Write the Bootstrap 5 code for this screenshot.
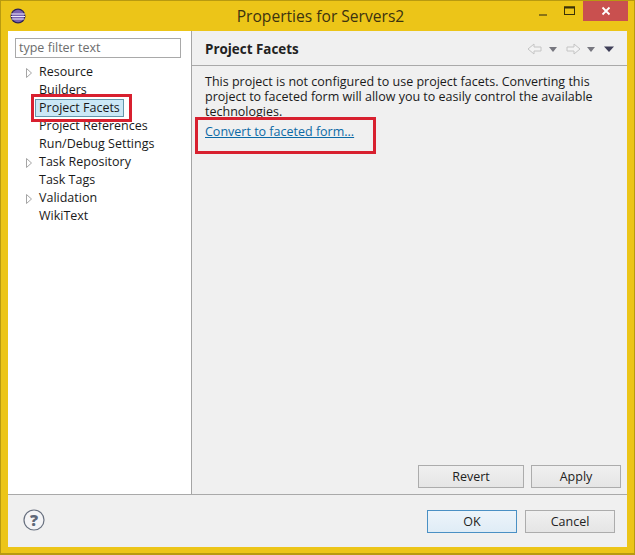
<!DOCTYPE html>
<html lang="en">
<head>
<meta charset="utf-8">
<title>Properties for Servers2</title>
<link href="https://cdn.jsdelivr.net/npm/bootstrap@5.3.0/dist/css/bootstrap.min.css" rel="stylesheet">
<style>
html,body{margin:0;height:555px;overflow:hidden}
body{font-family:"Open Sans","Noto Sans",sans-serif;font-size:12.5px;line-height:15px;color:#1a1a1a;background:#ecc518}
.win-frame{position:relative;width:635px;height:555px;background:#ecc518;border:1px solid #b89a10;border-bottom-width:2px;padding:0 7px 6px 7px}
.win-title{height:30px}
.win-icon{width:16px;height:16px;margin:7px 0 0 2px}
.win-name{font-size:15.6px;color:#3c3310;left:6px;right:0;top:6px;line-height:18px}
.win-ctrls{right:-1px;top:0}
.ctl-min,.ctl-max{width:27px;height:20px}
.ctl-close{width:45px;height:20px;background:#c9504f;color:#fff}
.win-client{background:#f0f0f0;height:517px}
.pane-left{width:184px;background:#fff;border-right:1px solid #a5a5a5;padding:7px 10px 0 7px}
.filter-box{height:20px;border:1px solid #a9a9a9;color:#6d6d6d;padding:0 3px;line-height:18px;margin-bottom:5px}
.tree-row{height:18px;line-height:18px;padding-left:24px;white-space:nowrap}
.tree-arrow{width:8px;height:10px;margin-left:-14px;margin-right:6px}
.tree-sel{background:#cbe8f6;border:1px solid #6498ac;width:89px;margin-left:20px;padding-left:3px;line-height:16px}
.pane-right{background:#f0f0f0}
.pane-head{height:35px;border-bottom:1px solid #a9a9a9;padding:2px 13px 0}
.pane-h{font-size:13.4px;font-weight:700;color:#222}
.pane-tools{margin-right:-3px}
.pane-text{padding:8px 13px 0 13px;width:420px}
.pane-link{color:#0c6aa6;display:block;margin-top:5px;line-height:15px}
.pane-actions{padding:0 6px 6px 0;gap:7px}
.foot-bar{height:53px;background:#f0f0f0;border-top:1px solid #a9a9a9;padding:15px 12px 0 15px}
.dlg-btn{height:23px;border:1px solid #acacac;background:linear-gradient(#f0f0f0,#e5e5e5);color:#222;line-height:21px;text-align:center}
.btn-w106{width:106px}
.btn-w90{width:90px}
.btn-def{border-color:#4a90c4;background:linear-gradient(#edf4fa,#dfecf6)}
.help-ico{margin-top:-1px}
.note-box{position:absolute;border:3px solid #d8202f;pointer-events:none}
.note-a{left:30px;top:93px;width:101px;height:28px}
.note-b{left:194px;top:116px;width:181px;height:37px}
</style>
</head>
<body>
<div class="win-frame d-flex flex-column">
  <div class="win-title position-relative flex-shrink-0">
    <svg class="win-icon" viewBox="0 0 16 16">
      <circle cx="8" cy="8" r="7.5" fill="#2c2255"/>
      <circle cx="8" cy="8" r="6.2" fill="#7a62b0"/>
      <path d="M1 6h14M1 8.500h14M1.500 11h13" stroke="#efeaf8" stroke-width="1.100"/>
    </svg>
    <div class="win-name position-absolute text-center">Properties for Servers2</div>
    <div class="win-ctrls position-absolute d-flex">
      <div class="ctl-min d-flex align-items-center justify-content-center">
        <svg width="10" height="10" viewBox="0 0 10 10"><path d="M1 9h8" stroke="#8a7416" stroke-width="2"/></svg>
      </div>
      <div class="ctl-max d-flex align-items-center justify-content-center">
        <svg width="11" height="10" viewBox="0 0 11 10"><rect x=".5" y="1" width="10" height="7.500" fill="none" stroke="#3a3208" stroke-width="1"/><path d="M0 1.500h11" stroke="#3a3208" stroke-width="2"/></svg>
      </div>
      <div class="ctl-close d-flex align-items-center justify-content-center">
        <svg width="10" height="10" viewBox="0 0 10 10"><path d="M1.500 1.500l7 7M8.500 1.500l-7 7" stroke="#fff" stroke-width="1.800"/></svg>
      </div>
    </div>
  </div>
  <div class="win-client d-flex flex-column">
    <div class="d-flex flex-grow-1" style="min-height:0">
      <div class="pane-left flex-shrink-0">
        <div class="filter-box">type filter text</div>
        <div class="tree-row"><svg class="tree-arrow" viewBox="0 0 8 10"><path d="M1.500 .5l5 4.500-5 4.500z" fill="#fff" stroke="#a5a5a5"/></svg>Resource</div>
        <div class="tree-row">Builders</div>
        <div class="tree-row tree-sel">Project Facets</div>
        <div class="tree-row">Project References</div>
        <div class="tree-row">Run/Debug Settings</div>
        <div class="tree-row"><svg class="tree-arrow" viewBox="0 0 8 10"><path d="M1.500 .5l5 4.500-5 4.500z" fill="#fff" stroke="#a5a5a5"/></svg>Task Repository</div>
        <div class="tree-row">Task Tags</div>
        <div class="tree-row"><svg class="tree-arrow" viewBox="0 0 8 10"><path d="M1.500 .5l5 4.500-5 4.500z" fill="#fff" stroke="#a5a5a5"/></svg>Validation</div>
        <div class="tree-row">WikiText</div>
      </div>
      <div class="pane-right flex-grow-1 d-flex flex-column">
        <div class="pane-head d-flex align-items-center justify-content-between flex-shrink-0">
          <span class="pane-h">Project Facets</span>
          <svg class="pane-tools" width="90" height="14" viewBox="0 0 90 14">
            <path d="M1 7l6-5v3h7v4H7v3z" fill="#f3f3f3" stroke="#c4c4c4"/>
            <path d="M22 5h8l-4 5z" fill="#77777f"/>
            <path d="M53 7l-6-5v3h-7v4h7v3z" fill="#f3f3f3" stroke="#c4c4c4"/>
            <path d="M60 5h8l-4 5z" fill="#77777f"/>
            <path d="M77 4.500h10l-5 5.500z" fill="#3f3f58"/>
          </svg>
        </div>
        <div class="pane-text flex-grow-1">
          This project is not configured to use project facets. Converting this project to faceted form will allow you to easily control the available technologies.
          <a class="pane-link" href="#">Convert to faceted form...</a>
        </div>
        <div class="pane-actions d-flex justify-content-end flex-shrink-0">
          <div class="dlg-btn btn-w106">Revert</div>
          <div class="dlg-btn btn-w90">Apply</div>
        </div>
      </div>
    </div>
    <div class="foot-bar d-flex justify-content-between flex-shrink-0">
      <svg class="help-ico" width="22" height="22" viewBox="0 0 22 22">
        <circle cx="11" cy="11" r="10" fill="#f4f4f6" stroke="#68707f" stroke-width="1.200"/>
        <text x="11" y="16.500" text-anchor="middle" font-family="Open Sans" font-size="16" font-weight="800" fill="#5f6878">?</text>
      </svg>
      <div class="d-flex gap-2">
        <div class="dlg-btn btn-w90 btn-def">OK</div>
        <div class="dlg-btn btn-w90">Cancel</div>
      </div>
    </div>
  </div>
  <div class="note-box note-a"></div>
  <div class="note-box note-b"></div>
</div>
<script src="https://cdn.jsdelivr.net/npm/bootstrap@5.3.0/dist/js/bootstrap.bundle.min.js"></script>
</body>
</html>
